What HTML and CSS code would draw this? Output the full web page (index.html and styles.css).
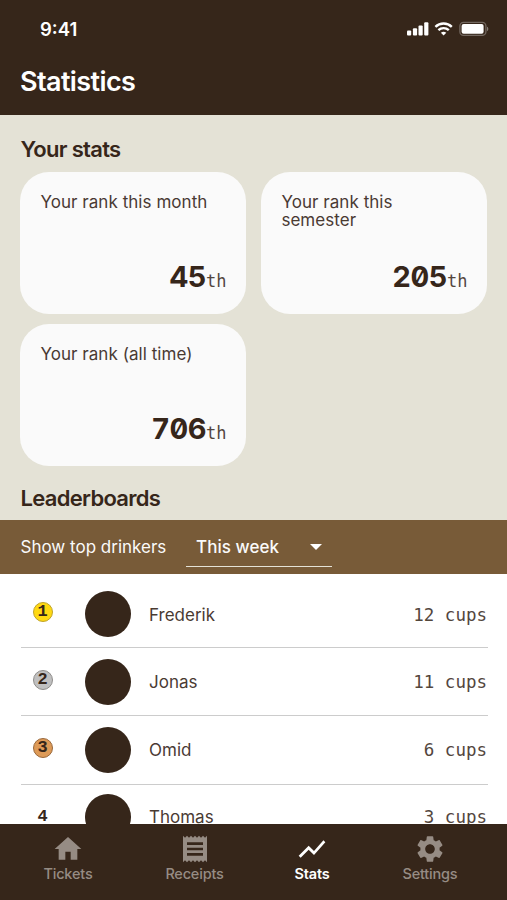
FILE: index.html
```html
<!DOCTYPE html>
<html lang="en">

<head>
    <meta charset="utf-8">
    <title>Statistics</title>
    <link rel="stylesheet" href="styles.css">
</head>

<body>
    <div class="app">
        <header class="header">
            <div class="statusbar">
                <span class="time">9:41</span>
                <svg class="status-icons" width="82" height="16" viewBox="0 0 82 16">
                    <g fill="#fff">
                        <rect x="0" y="9.5" width="4.2" height="5" rx="1"/>
                        <rect x="5.9" y="7.2" width="4.2" height="7.3" rx="1"/>
                        <rect x="11.5" y="4.4" width="4.2" height="10.1" rx="1"/>
                        <rect x="17.2" y="1.3" width="4.2" height="13.2" rx="1"/>
                        <path d="M36.600 14.500l2.700-2.700a4.200 4.200 0 0 0-5.400 0z"/>
                    </g>
                    <g fill="none" stroke="#fff" stroke-width="2.4">
                        <path d="M28.400 5.800a11.900 11.900 0 0 1 16.400 0"/>
                        <path d="M31.400 9.200a7.500 7.500 0 0 1 10.400 0"/>
                    </g>
                    <rect x="52.9" y="1.4" width="26" height="13" rx="3.6" fill="none" stroke="#fff" stroke-opacity=".3" stroke-width="1.3"/>
                    <rect x="54.6" y="3" width="22" height="9.8" rx="2" fill="#fff"/>
                    <path d="M80 5.800v4.400c1.800-.6 1.800-3.800 0-4.400z" fill="#fff" fill-opacity=".4"/>
                </svg>
            </div>
            <h1>Statistics</h1>
        </header>

        <main class="content">
            <h2>Your stats</h2>
            <div class="cards">
                <div class="card">
                    <p>Your rank this month</p>
                    <div class="rank"><b>45</b><span>th</span></div>
                </div>
                <div class="card">
                    <p>Your rank this semester</p>
                    <div class="rank"><b>205</b><span>th</span></div>
                </div>
                <div class="card">
                    <p>Your rank (all time)</p>
                    <div class="rank"><b>706</b><span>th</span></div>
                </div>
            </div>
            <h2 class="leader-title">Leaderboards</h2>

            <div class="filter">
                <span class="label">Show top drinkers</span>
                <div class="select">
                    <span>This week</span>
                    <svg width="12" height="6" viewBox="0 0 12 6"><path d="M0 0h12l-6 6z" fill="#fff"/></svg>
                </div>
            </div>

            <ul class="board">
                <li class="first">
                    <span class="medal gold">1</span>
                    <span class="avatar"></span>
                    <span class="name">Frederik</span>
                    <span class="cups">12 cups</span>
                </li>
                <li>
                    <span class="medal silver">2</span>
                    <span class="avatar"></span>
                    <span class="name">Jonas</span>
                    <span class="cups">11 cups</span>
                </li>
                <li>
                    <span class="medal bronze">3</span>
                    <span class="avatar"></span>
                    <span class="name">Omid</span>
                    <span class="cups">6 cups</span>
                </li>
                <li class="last">
                    <span class="medal">4</span>
                    <span class="avatar"></span>
                    <span class="name">Thomas</span>
                    <span class="cups">3 cups</span>
                </li>
            </ul>
        </main>

        <nav class="tabs">
            <a class="tab">
                <svg width="32" height="32" viewBox="0 0 24 24"><path d="M10 20v-6h4v6h5v-8h3L12 3 2 12h3v8z"/></svg>
                <span>Tickets</span>
            </a>
            <a class="tab">
                <svg width="32" height="32" viewBox="0 0 24 24"><path d="M18 17H6v-2h12v2zm0-4H6v-2h12v2zm0-4H6V7h12v2zM3 22l1.500-1.500L6 22l1.500-1.500L9 22l1.500-1.500L12 22l1.500-1.500L15 22l1.500-1.500L18 22l1.500-1.500L21 22V2l-1.500 1.500L18 2l-1.500 1.500L15 2l-1.500 1.500L12 2l-1.500 1.500L9 2 7.500 3.500 6 2 4.500 3.500 3 2v20z"/></svg>
                <span>Receipts</span>
            </a>
            <a class="tab active">
                <svg width="32" height="32" viewBox="0 0 24 24"><path d="M3.500 18.490l6-6.010 4 4L22 6.920l-1.410-1.410-7.090 7.970-4-4L2 16.990z"/></svg>
                <span>Stats</span>
            </a>
            <a class="tab">
                <svg width="32" height="32" viewBox="0 0 24 24"><path d="M19.140 12.940c.04-.3.060-.61.060-.94 0-.32-.02-.64-.07-.94l2.030-1.580c.18-.14.230-.41.120-.61l-1.920-3.320c-.12-.22-.37-.29-.59-.22l-2.390.96c-.5-.38-1.030-.7-1.620-.94l-.36-2.540c-.04-.24-.24-.41-.48-.41h-3.840c-.24 0-.43.170-.47.410l-.36 2.540c-.59.240-1.130.570-1.620.940l-2.390-.96c-.22-.08-.47 0-.59.220L2.740 8.870c-.12.210-.08.470.12.610l2.030 1.580c-.05.3-.09.630-.09.940s.02.640.07.940l-2.030 1.580c-.18.140-.23.410-.12.610l1.920 3.320c.12.220.37.290.59.220l2.390-.96c.5.380 1.030.7 1.620.940l.36 2.540c.05.240.24.410.48.410h3.840c.24 0 .44-.17.470-.41l.36-2.540c.59-.24 1.130-.56 1.620-.94l2.390.96c.22.080.47 0 .59-.22l1.920-3.320c.12-.22.070-.47-.12-.61l-2.010-1.580zM12 15.600c-1.980 0-3.600-1.620-3.600-3.600s1.620-3.600 3.600-3.600 3.600 1.620 3.600 3.600-1.620 3.600-3.600 3.600z"/></svg>
                <span>Settings</span>
            </a>
        </nav>
    </div>
</body>

</html>
```
FILE: styles.css
```css
* {
    box-sizing: border-box;
}

body {
    margin: 0;
    font-family: Inter, sans-serif;
    font-size: 17px;
    color: #36261a;
    background-color: #fff;
}

h1, h2, p, ul {
    margin: 0;
    padding: 0;
}

.app {
    height: 900px;
    display: flex;
    flex-direction: column;
    overflow: hidden;
}

.header {
    height: 115px;
    flex: none;
    background-color: #36261a;
    color: #fff;
}

.statusbar {
    display: flex;
    justify-content: space-between;
    align-items: center;
    height: 58px;
    padding: 0 18px 0 40px;
}

.time {
    font-size: 18.5px;
    font-weight: 600;
}

h1 {
    padding-left: 20px;
    font-size: 27px;
    line-height: 47px;
    font-weight: 600;
    letter-spacing: -0.6px;
}

.content {
    flex: 1;
    min-height: 0;
    overflow: hidden;
    background-color: #e4e2d6;
}

h2 {
    height: 57px;
    padding: 19px 20.5px 0;
    font-size: 22px;
    line-height: 30px;
    font-weight: 600;
    letter-spacing: -0.7px;
}

.cards {
    display: grid;
    grid-template-columns: 226px 226px;
    grid-auto-rows: 142px;
    gap: 9.5px 15px;
    padding-left: 20.4px;
}

.card {
    display: flex;
    flex-direction: column;
    justify-content: space-between;
    padding: 22px 20px 16px;
    border-radius: 29px;
    background-color: #fafafa;
}

.card p {
    line-height: 17.5px;
    letter-spacing: 0.05px;
    opacity: .9;
}

.rank {
    text-align: right;
    line-height: 34px;
    white-space: nowrap;
}

.rank b {
    font-size: 29px;
    font-weight: 700;
    letter-spacing: -0.5px;
    font-feature-settings: "tnum", "zero";
}

.rank span {
    font-family: "DejaVu Sans Mono", monospace;
    opacity: .85;
}

.leader-title {
    height: 54.5px;
    padding-top: 17px;
}

.filter {
    display: flex;
    align-items: flex-start;
    height: 54px;
    padding: 8px 20px 0 20.5px;
    background-color: #785b38;
    color: #fafafa;
    line-height: 39px;
}

.label {
    width: 145.5px;
    white-space: nowrap;
}

.select {
    display: flex;
    justify-content: space-between;
    align-items: center;
    width: 146px;
    height: 39px;
    margin-left: 20px;
    padding: 0 10px;
    border-bottom: 1.5px solid #e4e2d6;
    font-weight: 500;
    letter-spacing: 0.05px;
}

.board {
    height: 300px;
    padding: 0 19px 0 21px;
    background-color: #fff;
    list-style: none;
}

.board li {
    display: flex;
    align-items: center;
    height: 68.3px;
    border-bottom: 1.5px solid #ccc;
}

.board li.first {
    height: 74px;
    padding-top: 7px;
}

.board li.last {
    height: 64px;
    border: none;
}

.medal {
    width: 20px;
    height: 20px;
    margin: 0 32.5px 4px 11.5px;
    border: 1px solid transparent;
    border-radius: 50%;
    font-family: "Liberation Mono", monospace;
    font-size: 17px;
    font-weight: 700;
    line-height: 18px;
    text-align: center;
}

.last .medal {
    margin-bottom: 0;
}

.gold {
    background-color: #ffd912;
    border-color: #bfa32a;
}

.silver {
    background-color: #c0c0c0;
    border-color: #8f8d8b;
}

.bronze {
    background-color: #dd9a57;
    border-color: #99683b;
}

.avatar {
    width: 46px;
    height: 46px;
    margin-right: 18px;
    border-radius: 50%;
    background-color: #36261a;
}

.name {
    padding-top: 1px;
    opacity: .9;
}

.cups {
    margin: 1px 1px 0 auto;
    font-family: "DejaVu Sans Mono", monospace;
    font-size: 17.5px;
    opacity: .85;
}

.tabs {
    display: grid;
    grid-template-columns: 136px 117px 118px 118px;
    flex: none;
    height: 76px;
    padding-top: 9px;
    background-color: #36261a;
    color: #968c84;
}

.tab {
    display: flex;
    flex-direction: column;
    align-items: center;
    font-size: 14.5px;
    font-weight: 500;
    line-height: 18px;
    letter-spacing: -0.2px;
}

.tab svg {
    fill: currentColor;
}

.active {
    color: #fff;
    font-weight: 600;
}
```
